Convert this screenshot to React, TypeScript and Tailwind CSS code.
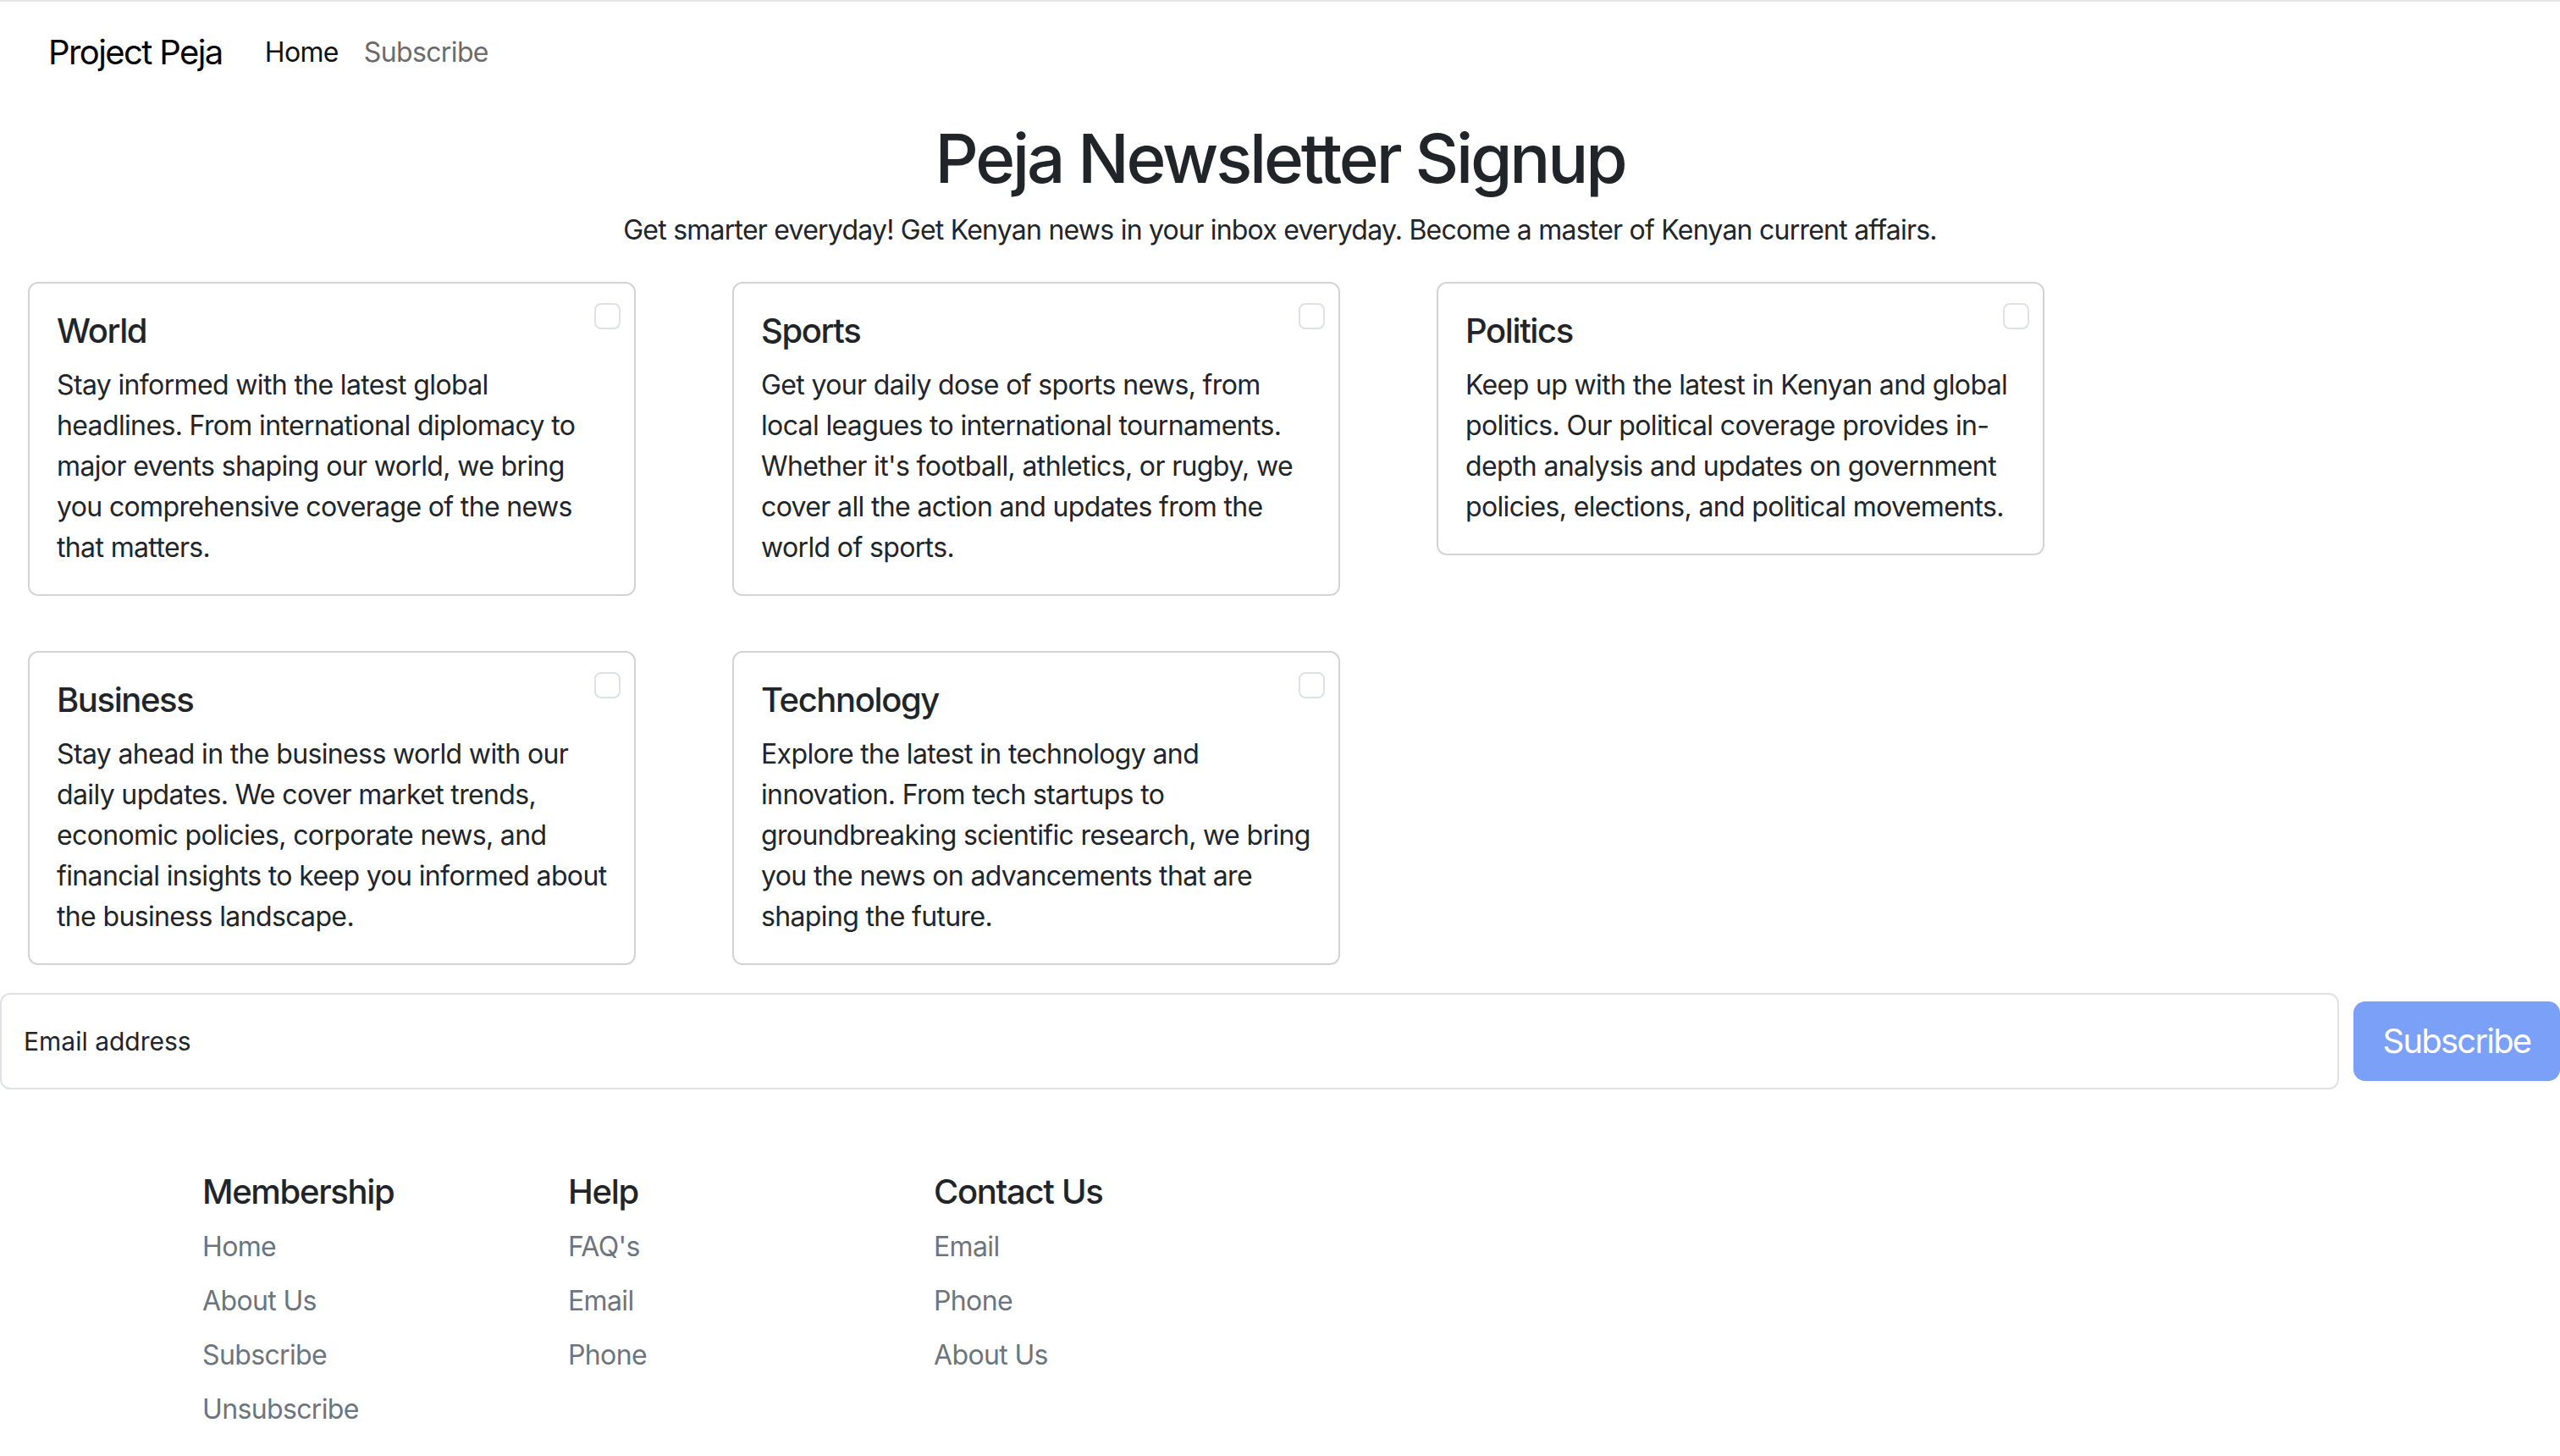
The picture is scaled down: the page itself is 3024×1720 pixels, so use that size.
import React from "react";

type Topic = {
  title: string;
  lines: string[];
};

const topics: Topic[] = [
  {
    title: "World",
    lines: [
      "Stay informed with the latest global",
      "headlines. From international diplomacy to",
      "major events shaping our world, we bring",
      "you comprehensive coverage of the news",
      "that matters.",
    ],
  },
  {
    title: "Sports",
    lines: [
      "Get your daily dose of sports news, from",
      "local leagues to international tournaments.",
      "Whether it's football, athletics, or rugby, we",
      "cover all the action and updates from the",
      "world of sports.",
    ],
  },
  {
    title: "Politics",
    lines: [
      "Keep up with the latest in Kenyan and global",
      "politics. Our political coverage provides in-",
      "depth analysis and updates on government",
      "policies, elections, and political movements.",
    ],
  },
  {
    title: "Business",
    lines: [
      "Stay ahead in the business world with our",
      "daily updates. We cover market trends,",
      "economic policies, corporate news, and",
      "financial insights to keep you informed about",
      "the business landscape.",
    ],
  },
  {
    title: "Technology",
    lines: [
      "Explore the latest in technology and",
      "innovation. From tech startups to",
      "groundbreaking scientific research, we bring",
      "you the news on advancements that are",
      "shaping the future.",
    ],
  },
];

const footerCols = [
  { title: "Membership", links: ["Home", "About Us", "Subscribe", "Unsubscribe"] },
  { title: "Help", links: ["FAQ's", "Email", "Phone"] },
  { title: "Contact Us", links: ["Email", "Phone", "About Us"] },
];

function TopicCard({ topic }: { topic: Topic }) {
  return (
    <div className="relative w-[718px] rounded-[12px] border-2 border-[#d4d4d4] bg-white px-[32px] pt-[32px] pb-[31px]">
      <input
        type="checkbox"
        className="absolute top-[23px] right-[16px] h-[31px] w-[31px] appearance-none rounded-[8px] border-2 border-[#dee2e6] bg-white"
      />
      <h5 className="mb-[16px] text-[40px] leading-[48px] font-medium tracking-[-0.035em] text-[#212529]">
        {topic.title}
      </h5>
      <p className="text-[32px] leading-[48px] tracking-[-0.02em] whitespace-nowrap text-[#212529]">
        {topic.lines.map((line, i) => (
          <React.Fragment key={i}>
            {line}
            {i < topic.lines.length - 1 && <br />}
          </React.Fragment>
        ))}
      </p>
    </div>
  );
}

export default function App() {
  return (
    <div
      className="h-[1720px] w-[3024px] overflow-hidden border-t-2 border-[#e5e5e5] bg-white text-[#212529]"
      style={{ fontFamily: "Inter, 'Noto Sans', 'Liberation Sans', sans-serif" }}
    >
      {/* navbar */}
      <nav className="flex h-[120px] items-center px-[57px]">
        <a className="mr-[50px] text-[40px] tracking-[-0.04em] text-black">Project Peja</a>
        <div className="flex items-center gap-[30px] text-[32px] tracking-[-0.02em]">
          <a className="text-[#111111]">Home</a>
          <a className="text-[#6b6b6b]">Subscribe</a>
        </div>
      </nav>

      {/* heading */}
      <h1 className="mt-[17px] text-center text-[80px] leading-[96px] font-medium tracking-[-0.04em] text-[#212529]">
        Peja Newsletter Signup
      </h1>
      <p className="mt-[13px] text-center text-[32px] leading-[48px] tracking-[-0.024em]">
        Get smarter everyday! Get Kenyan news in your inbox everyday. Become a master of Kenyan current affairs.
      </p>

      {/* topics */}
      <div className="mt-[37px] grid grid-cols-[718px_718px_718px] items-start gap-x-[114px] gap-y-[65px] pl-[33px]">
        {topics.map((t) => (
          <TopicCard key={t.title} topic={t} />
        ))}
      </div>

      {/* email + subscribe */}
      <div className="mt-[33px] flex items-center gap-[17px]">
        <input
          type="email"
          placeholder="Email address"
          className="h-[114px] flex-1 rounded-[12px] border-2 border-[#dee2e6] bg-white px-[26px] text-[30px] text-[#212529] outline-none placeholder:text-[#212529]"
        />
        <button className="h-[94px] w-[244px] shrink-0 rounded-[14px] bg-[#7ba0f8] text-[40px] tracking-[-0.045em] text-white">
          Subscribe
        </button>
      </div>

      {/* footer */}
      <footer className="mt-[97px] flex pl-[239px]">
        {footerCols.map((col) => (
          <div key={col.title} className="w-[432px]">
            <h5 className="mb-[17px] text-[40px] leading-[48px] font-medium tracking-[-0.033em] text-[#212529]">
              {col.title}
            </h5>
            <ul className="flex flex-col gap-[16px]">
              {col.links.map((l) => (
                <li key={l} className="text-[32px] leading-[48px] tracking-[-0.02em] text-[#6c757d]">
                  {l}
                </li>
              ))}
            </ul>
          </div>
        ))}
      </footer>
    </div>
  );
}
